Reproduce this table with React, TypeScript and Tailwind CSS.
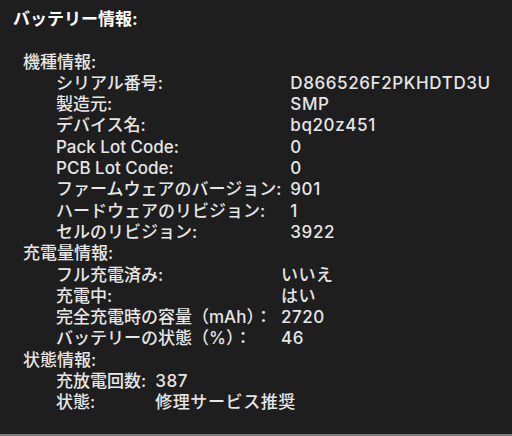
import React from "react";

type Row = [string, string];

const sections: { title: string; rows: Row[] }[] = [
  {
    title: "機種情報:",
    rows: [
      ["シリアル番号:", "D866526F2PKHDTD3U"],
      ["製造元:", "SMP"],
      ["デバイス名:", "bq20z451"],
      ["Pack Lot Code:", "0"],
      ["PCB Lot Code:", "0"],
      ["ファームウェアのバージョン:", "901"],
      ["ハードウェアのリビジョン:", "1"],
      ["セルのリビジョン:", "3922"],
    ],
  },
  {
    title: "充電量情報:",
    rows: [
      ["フル充電済み:", "いいえ"],
      ["充電中:", "はい"],
      ["完全充電時の容量（mAh）：", "2720"],
      ["バッテリーの状態（%）：", "46"],
    ],
  },
  {
    title: "状態情報:",
    rows: [
      ["充放電回数:", "387"],
      ["状態:", "修理サービス推奨"],
    ],
  },
];

export default function App() {
  return (
    <div
      className="w-[512px] h-[436px] bg-[#1e1e1e] text-[#e6e6e6] flex flex-col overflow-hidden"
      style={{ fontFamily: 'Inter, "Noto Sans CJK JP", sans-serif' }}
    >
      <div className="flex-1 pt-[9px] pl-[13px] text-[17px] leading-[21.3px]">
        <div className="font-bold text-white">バッテリー情報:</div>
        <div className="h-[21.3px]" />
        <div className="pl-[10px]">
          {sections.map((s) => (
            <div key={s.title}>
              <div className="font-medium">{s.title}</div>
              <div className="grid grid-cols-[auto_1fr] gap-x-[9px] pl-[33px] font-medium">
                {s.rows.map(([k, v]) => (
                  <React.Fragment key={k}>
                    <div className="whitespace-nowrap">{k}</div>
                    <div className="whitespace-nowrap tracking-[0.6px]">{v}</div>
                  </React.Fragment>
                ))}
              </div>
            </div>
          ))}
        </div>
      </div>
      <div className="h-[2px] bg-[#7a7a7a]" />
    </div>
  );
}
